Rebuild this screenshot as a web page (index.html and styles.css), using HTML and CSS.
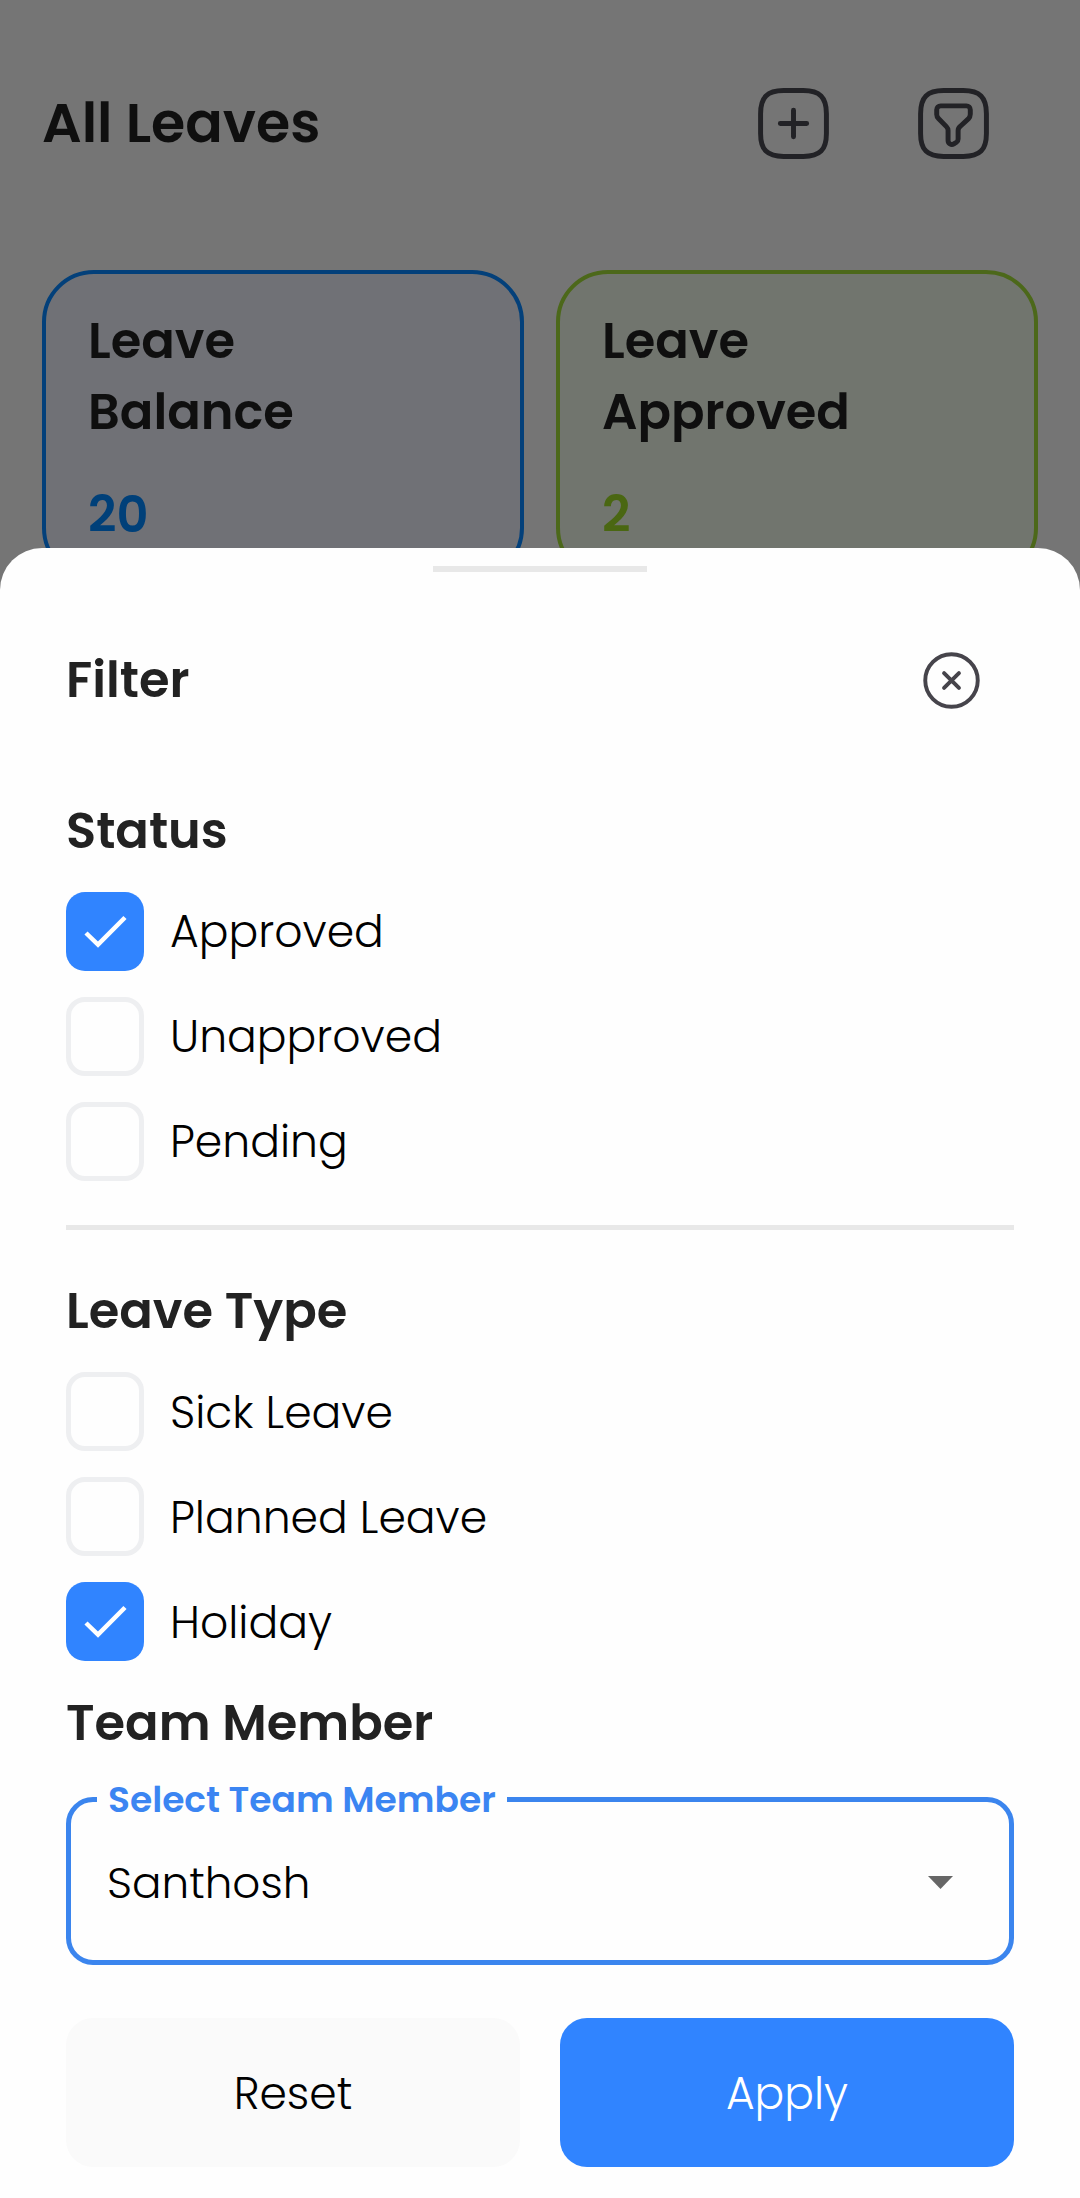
FILE: index.html
```html
<!DOCTYPE html>
<html lang="en">
<head>
<meta charset="utf-8">
<title>All Leaves</title>
<link rel="stylesheet" href="styles.css">
</head>
<body>
<main class="page">
  <header class="topbar">
    <h1 class="topbar-title">All Leaves</h1>
    <div class="topbar-actions">
      <button class="icon-button" aria-label="Add leave">
        <svg class="icon" width="79" height="79" viewBox="0 0 24 24">
          <path d="M8 12h8M12 16V8M9 22h6c5 0 7-2 7-7V9c0-5-2-7-7-7H9C4 2 2 4 2 9v6c0 5 2 7 7 7z"/>
        </svg>
      </button>
      <button class="icon-button" aria-label="Filter leaves">
        <svg class="icon" width="79" height="79" viewBox="0 0 24 24">
          <path d="M9 22h6c5 0 7-2 7-7V9c0-5-2-7-7-7H9C4 2 2 4 2 9v6c0 5 2 7 7 7z"/>
          <path d="M8.1 6.65h7.8c.7 0 1.2.5 1.2 1.2v1.35c0 .5-.3 1.1-.6 1.4l-2.5 2.3c-.4.3-.6.9-.6 1.3v2.5c0 .4-.2.8-.5 1l-.8.5c-.8.5-1.75-.1-1.75-1v-3.05c0-.4-.2-.9-.5-1.2l-2.35-2.4c-.3-.3-.6-.9-.6-1.3V7.85c0-.7.5-1.2 1.2-1.2z"/>
        </svg>
      </button>
    </div>
  </header>

  <section class="cards">
    <article class="card card-balance">
      <h2 class="card-title">Leave<br>Balance</h2>
      <p class="card-value">20</p>
    </article>
    <article class="card card-approved">
      <h2 class="card-title">Leave<br>Approved</h2>
      <p class="card-value">2</p>
    </article>
  </section>
</main>

<section class="sheet" role="dialog" aria-label="Filter">
  <div class="handle"></div>
  <div class="sheet-header">
    <h2 class="heading">Filter</h2>
    <button class="icon-button" aria-label="Close">
      <svg class="icon icon-close" width="63" height="63" viewBox="0 0 24 24">
        <path d="M12 22c5.5 0 10-4.5 10-10S17.5 2 12 2 2 6.5 2 12s4.5 10 10 10zM9.17 14.83l5.66-5.66M14.83 14.83L9.17 9.17"/>
      </svg>
    </button>
  </div>

  <h3 class="heading">Status</h3>
  <div class="options">
    <label class="option"><span class="box box-on"><svg class="tick" width="78" height="79" viewBox="0 0 78 79"><path d="M20 41L32 52.5L59 25.5"/></svg></span>Approved</label>
    <label class="option"><span class="box"></span>Unapproved</label>
    <label class="option"><span class="box"></span>Pending</label>
  </div>

  <hr class="divider">

  <h3 class="heading">Leave Type</h3>
  <div class="options">
    <label class="option"><span class="box"></span><span class="type-name">Sick Leave</span></label>
    <label class="option"><span class="box"></span><span class="type-name">Planned Leave</span></label>
    <label class="option"><span class="box box-on"><svg class="tick" width="78" height="79" viewBox="0 0 78 79"><path d="M20 41L32 52.5L59 25.5"/></svg></span><span class="type-name">Holiday</span></label>
  </div>

  <h3 class="heading heading-member">Team Member</h3>
  <fieldset class="select">
    <legend class="select-label">Select Team Member</legend>
    <div class="select-row">
      <span>Santhosh</span>
      <svg class="caret" width="25" height="13" viewBox="0 0 25 13"><path d="M0 0h25L12.5 13z"/></svg>
    </div>
  </fieldset>

  <div class="actions">
    <button class="button button-reset">Reset</button>
    <button class="button button-apply">Apply</button>
  </div>
</section>
</body>
</html>
```
FILE: styles.css
```css
* { box-sizing: border-box; margin: 0; padding: 0; }

body {
  position: relative;
  width: 1080px;
  height: 2198px;
  overflow: hidden;
  background: #757575;
  color: #0f0f0f;
  font-family: Poppins, Inter, "Liberation Sans", sans-serif;
}

button { border: 0; background: none; font: inherit; }

/* Dimmed page */
.page { padding: 84px 42px 0; }

.topbar {
  display: flex;
  align-items: center;
  justify-content: space-between;
  height: 79px;
  padding-right: 45px;
}
.topbar-title { padding-bottom: 2px; font-size: 55.4px; font-weight: 600; line-height: 77px; }
.topbar-actions { display: flex; gap: 81px; }
.icon-button { display: flex; }
.icon {
  fill: none;
  stroke: #222226;
  stroke-width: 1.5;
  stroke-linecap: round;
  stroke-linejoin: round;
}
.icon-close { stroke: #46444b; }

.cards {
  display: grid;
  grid-template-columns: 1fr 1fr;
  gap: 32px;
  margin-top: 107px;
}
.card {
  height: 310px;
  padding: 31px 42px 0;
  border: 4px solid;
  border-radius: 52px;
}
.card-title { color: #0f0f0f; font-size: 49.5px; font-weight: 600; line-height: 71px; }
.card-value { margin-top: 32px; font-size: 49.5px; font-weight: 600; line-height: 72px; }
.card-balance { background: #707176; border-color: #03407a; color: #004079; }
.card-approved { background: #71756e; border-color: #4c681a; color: #4a6712; }

/* Bottom sheet over the page */
.sheet {
  position: absolute;
  inset: 548px 0 0;
  padding: 18px 66px 31px;
  border-radius: 42px 42px 0 0;
  background: #fefefe;
  color: #000;
}
.handle { width: 214px; height: 6px; margin: 0 auto; background: #e8e8e8; }
.sheet-header {
  display: flex;
  align-items: center;
  justify-content: space-between;
  height: 64px;
  margin: 76px 31px 83px 0;
}
.heading { color: #222; font-size: 49.5px; font-weight: 600; line-height: 72px; }

.options { display: grid; gap: 26px; margin-top: 25px; }
.option {
  display: flex;
  align-items: center;
  gap: 26px;
  height: 79px;
  font-size: 44.1px;
  font-weight: 300;
}
.type-name { padding-top: 2px; }
.box {
  width: 78px;
  height: 79px;
  border: 5px solid #eeeff1;
  border-radius: 19px;
}
.box-on { border: 0; background: #3084ff; }
.tick { display: block; fill: none; stroke: #fff; stroke-width: 4.5; }

.divider { height: 5px; margin: 44px 0 45px; border: 0; background: #e8e8e8; }

.heading-member { margin-top: 26px; }
.select {
  height: 188px;
  margin-top: 18px;
  padding: 0 56px 18px 26px;
  border: 5px solid #3b85ee;
  border-radius: 27px;
}
.select-label {
  padding: 0 11px;
  color: #3b85f2;
  font-size: 36px;
  font-weight: 600;
  line-height: 45px;
}
.select-row {
  display: flex;
  align-items: center;
  justify-content: space-between;
  height: 120px;
  padding-left: 10px;
  font-size: 43.7px;
  font-weight: 300;
}
.caret { fill: #666; }

.actions {
  display: grid;
  grid-template-columns: 1fr 1fr;
  gap: 40px;
  margin-top: 53px;
}
.button {
  height: 149px;
  padding-top: 2px;
  border-radius: 27px;
  font-size: 44px;
  font-weight: 300;
}
.button-reset { background: #fafafa; color: #000; }
.button-apply { background: #3084ff; color: #fff; }
```
